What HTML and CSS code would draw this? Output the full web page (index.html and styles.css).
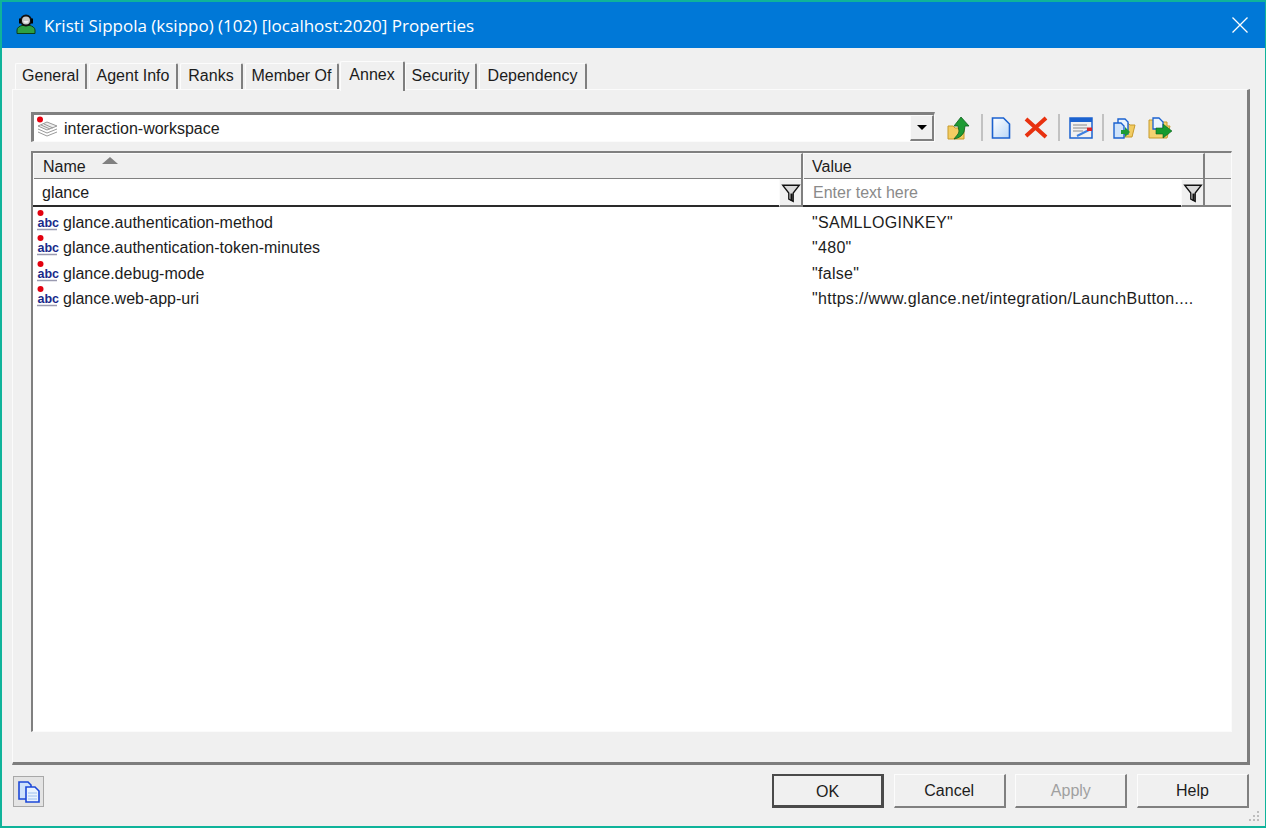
FILE: index.html
```html
<!DOCTYPE html>
<html lang="en">
<head>
<meta charset="utf-8">
<title>Kristi Sippola (ksippo) (102) [localhost:2020] Properties</title>
<link rel="stylesheet" href="styles.css">
</head>
<body>
<div class="window">
  <header class="titlebar">
    <svg class="agent-icon" width="20" height="22" viewBox="0 0 20 22">
      <path d="M1 20.500v-3.500c0-2.500 3-4 5-4.500h8c2 .5 5 2 5 4.500v3.500z" fill="#2ea043" stroke="#0b3d17"/>
      <circle cx="10" cy="7.500" r="5" fill="#c9c9c9" stroke="#111" stroke-width="2"/>
      <path d="M7.500 8c0 2.500 5 2.500 5 0" fill="#f2f2f2" stroke="none"/>
      <path d="M4 5.500v5" stroke="#000" stroke-width="2"/><path d="M16 5.500v5" stroke="#000" stroke-width="2"/>
    </svg>
    <span class="title-text">Kristi Sippola (ksippo) (102) [localhost:2020] Properties</span>
    <svg class="close-icon" width="16" height="16" viewBox="0 0 16 16"><path d="M.5.500l15 15M15.500.500l-15 15" stroke="#fff" stroke-width="1.300" fill="none"/></svg>
  </header>

  <nav class="tabs">
    <span class="tab tab-general">General</span>
    <span class="tab tab-agent">Agent Info</span>
    <span class="tab tab-ranks">Ranks</span>
    <span class="tab tab-member">Member Of</span>
    <span class="tab tab-annex active">Annex</span>
    <span class="tab tab-security">Security</span>
    <span class="tab tab-dependency">Dependency</span>
  </nav>

  <main class="panel">
    <div class="toolbar-row">
      <div class="combo">
        <svg class="layers-icon" width="24" height="24" viewBox="0 0 24 24">
          <path d="M2 11l9-4 10 4-10 4z" fill="#eee" stroke="#999"/>
          <path d="M2 14l9 4 10-4M2 17l9 4 10-4M5 10l9 4M8 9l9 4" fill="none" stroke="#999"/>
          <circle cx="4" cy="4.500" r="3" fill="#e8000f"/>
        </svg>
        <span class="combo-text">interaction-workspace</span>
        <span class="combo-btn"><i class="combo-arrow"></i></span>
      </div>
      <div class="tools">
        <svg class="tool tool-up" width="24" height="26" viewBox="0 0 24 26">
          <path d="M1 11h5l2 2h9v11H1z" fill="#f2cc62" stroke="#c79a2b"/>
          <path d="M7 24c2-3 5-5 5-8l-1-5H7l7-9 8 9h-4l-1 6c-2 4-5 6-10 7z" fill="#1e9b35" stroke="#0c5f1d" stroke-width=".8"/>
        </svg>
        <i class="sep"></i>
        <svg class="tool tool-doc" width="20" height="24" viewBox="0 0 20 24">
          <defs><linearGradient id="docFill" x1="0" y1="0" x2="1" y2="1"><stop offset="0" stop-color="#fff"/><stop offset="1" stop-color="#b9d7f7"/></linearGradient></defs>
          <path d="M1.500 2h11l6 6v14h-17z" fill="url(#docFill)" stroke="#1b62cf" stroke-width="1.600"/>
        </svg>
        <svg class="tool tool-del" width="24" height="24" viewBox="0 0 24 24">
          <path d="M2 3l20 18M22 2L2 20" stroke="#e8310f" stroke-width="4" fill="none"/>
        </svg>
        <i class="sep sep-b"></i>
        <svg class="tool tool-form" width="24" height="24" viewBox="0 0 24 24">
          <rect x="1" y="2" width="22" height="20" fill="#f1f1f1" stroke="#1b62cf" stroke-width="1.500"/>
          <rect x="1" y="2" width="22" height="4" fill="#1b62cf"/>
          <path d="M4 9h14M4 12h14M4 15h10" stroke="#8a8a8a"/>
          <path d="M8 20l12-6" stroke="#3c7fe0" stroke-width="2"/>
          <rect x="18" y="11.500" width="5" height="3.500" fill="#d8232a"/>
        </svg>
        <i class="sep sep-c"></i>
        <svg class="tool tool-import" width="24" height="24" viewBox="0 0 24 24">
          <path d="M11 7h5l2 2h5l-3 12H9z" fill="#f2cc62" stroke="#c79a2b"/>
          <path d="M6 3h7l3 3v12H6z" fill="#eaf3fd" stroke="#1b62cf" stroke-width="1.400"/>
          <path d="M2 7h7l3 3v12H2z" fill="#cfe3fa" stroke="#1b62cf" stroke-width="1.400"/>
          <path d="M9 14h4v-3l5 5-5 5v-3H9z" fill="#1e9b35"/>
        </svg>
        <svg class="tool tool-export" width="26" height="24" viewBox="0 0 26 24">
          <path d="M2 4h5l2 2h11v4h3l-3 12H2z" fill="#f5d271" stroke="#c79a2b"/>
          <path d="M6 2h6l4 4v7H6z" fill="#eaf3fd" stroke="#1b62cf" stroke-width="1.300"/>
          <path d="M9 12h7V8l9 7-9 7v-4H9z" fill="#159a2e" stroke="#0c5f1d" stroke-width=".6"/>
        </svg>
      </div>
    </div>

    <section class="grid">
      <div class="head-row">
        <div class="head-cell head-name"><span>Name</span><i class="sort-arrow"></i></div>
        <div class="head-cell head-value"><span>Value</span></div>
        <div class="head-tail"></div>
      </div>
      <div class="filter-row">
        <div class="filter-cell">
          <span class="filter-text">glance</span>
          <span class="filter-btn"><svg width="20" height="20" viewBox="0 0 18 18"><path d="M1.500 2h15l-5.500 7v7.500l-4-2V9z" fill="#d9d9d9" stroke="#111" stroke-width="1.200"/><path d="M9.500 9.500v6.500" stroke="#111" stroke-width="2"/></svg></span>
        </div>
        <div class="filter-cell filter-cell-value">
          <span class="filter-text placeholder">Enter text here</span>
          <span class="filter-btn"><svg width="20" height="20" viewBox="0 0 18 18"><path d="M1.500 2h15l-5.500 7v7.500l-4-2V9z" fill="#d9d9d9" stroke="#111" stroke-width="1.200"/><path d="M9.500 9.500v6.500" stroke="#111" stroke-width="2"/></svg></span>
        </div>
        <div class="filter-tail"></div>
      </div>
      <div class="rows">
        <div class="row">
          <div class="cell-name"><svg class="abc" width="24" height="24" viewBox="0 0 24 24"><circle cx="4.500" cy="4" r="3" fill="#e3000f"/><text x="1.500" y="18" class="abc-text">abc</text><path d="M1 20.500h20" stroke="#9a9ab0" stroke-width="1.500"/></svg><span>glance.authentication-method</span></div>
          <div class="cell-value">"SAMLLOGINKEY"</div>
        </div>
        <div class="row">
          <div class="cell-name"><svg class="abc" width="24" height="24" viewBox="0 0 24 24"><circle cx="4.500" cy="4" r="3" fill="#e3000f"/><text x="1.500" y="18" class="abc-text">abc</text><path d="M1 20.500h20" stroke="#9a9ab0" stroke-width="1.500"/></svg><span>glance.authentication-token-minutes</span></div>
          <div class="cell-value">"480"</div>
        </div>
        <div class="row">
          <div class="cell-name"><svg class="abc" width="24" height="24" viewBox="0 0 24 24"><circle cx="4.500" cy="4" r="3" fill="#e3000f"/><text x="1.500" y="18" class="abc-text">abc</text><path d="M1 20.500h20" stroke="#9a9ab0" stroke-width="1.500"/></svg><span>glance.debug-mode</span></div>
          <div class="cell-value">"false"</div>
        </div>
        <div class="row">
          <div class="cell-name"><svg class="abc" width="24" height="24" viewBox="0 0 24 24"><circle cx="4.500" cy="4" r="3" fill="#e3000f"/><text x="1.500" y="18" class="abc-text">abc</text><path d="M1 20.500h20" stroke="#9a9ab0" stroke-width="1.500"/></svg><span>glance.web-app-uri</span></div>
          <div class="cell-value">"https://www.glance.net/integration/LaunchButton....</div>
        </div>
      </div>
    </section>
  </main>

  <footer class="footer">
    <span class="copy-btn">
      <svg width="24" height="24" viewBox="0 0 24 24">
        <path d="M2 2h9l3 3v14H2z" fill="#cfe2fb" stroke="#1c48d8" stroke-width="1.600"/>
        <path d="M9 7h9l4 4v11H9z" fill="#eaf3fe" stroke="#1c48d8" stroke-width="1.600"/>
        <path d="M11 13h9M11 16h9M11 19h9" stroke="#9cc0f0"/>
      </svg>
    </span>
    <div class="buttons">
      <span class="btn btn-default">OK</span>
      <span class="btn">Cancel</span>
      <span class="btn btn-disabled">Apply</span>
      <span class="btn">Help</span>
    </div>
  </footer>
  <svg class="grip" width="12" height="12" viewBox="0 0 12 12"><path d="M8 0h2v2H8zM4 4h2v2H4zM8 4h2v2H8zM0 8h2v2H0zM4 8h2v2H4zM8 8h2v2H8z" fill="#bdbdbd"/></svg>
</div>
</body>
</html>
```

FILE: styles.css
```css
* { box-sizing: border-box; }
html, body { margin: 0; padding: 0; }
body {
  width: 1266px;
  height: 828px;
  overflow: hidden;
  font-family: "Liberation Sans", Arial, sans-serif;
  font-size: 16px;
  color: #1c1c1c;
  background: #f0f0f0;
}
.window {
  position: relative;
  width: 1266px;
  height: 828px;
  border: 2px solid #0fb39a;
  border-right-width: 1px;
  background: #f0f0f0;
  display: flex;
  flex-direction: column;
}

/* title bar */
.titlebar {
  height: 46px;
  flex: none;
  background: #0078d7;
  display: flex;
  align-items: center;
  padding: 0 17px 0 14px;
  color: #fff;
}
.agent-icon { flex: none; margin-top: -2px; }
.title-text {
  margin-left: 8px;
  font-family: "Open Sans", "Noto Sans", sans-serif;
  font-size: 17px;
  white-space: nowrap;
}
.close-icon { margin-left: auto; }

/* tabs */
.tabs {
  height: 41px;
  flex: none;
  display: flex;
  align-items: flex-end;
  padding-left: 13px;
  gap: 2px;
}
.tab {
  height: 26px;
  line-height: 24px;
  text-align: center;
  white-space: nowrap;
  background: #f0f0f0;
  border-top: 1px solid #fcfcfc;
  border-left: 1px solid #fcfcfc;
  border-right: 2px solid #7f7f7f;
  border-radius: 2px 2px 0 0;
}
.tab-general { width: 72px; }
.tab-agent { width: 89px; }
.tab-ranks { width: 63px; }
.tab-member { width: 94px; }
.tab-annex {
  width: 65px;
  margin-left: -1px;
  margin-right: -2px;
}
.tab-security { width: 72px; }
.tab-dependency { width: 108px; }
.tab.active {
  position: relative;
  z-index: 1;
  height: 30px;
  line-height: 25px;
  margin-bottom: -2px;
  padding-bottom: 4px;
  background: #f0f0f0;
}

/* panel */
.panel {
  width: 1238px;
  height: 676px;
  flex: none;
  margin-left: 10px;
  background: #f0f0f0;
  border-top: 1px solid #fbfbfb;
  border-left: 1px solid #fbfbfb;
  border-right: 3px solid #7d7d7d;
  border-bottom: 3px solid #7d7d7d;
  padding: 22px 14px 0 18px;
}
.toolbar-row {
  display: flex;
  align-items: flex-start;
  height: 31px;
}
.combo {
  width: 904px;
  height: 30px;
  flex: none;
  display: flex;
  align-items: center;
  background: #fff;
  border-top: 3px solid #808080;
  border-left: 3px solid #808080;
  border-bottom: 1px solid #fbfbfb;
  border-right: 1px solid #fbfbfb;
  padding-left: 2px;
}
.layers-icon { flex: none; margin-top: -3px; }
.combo-text { margin: 1px 0 0 4px; }
.combo-btn {
  margin-left: auto;
  width: 24px;
  height: 26px;
  background: #f0f0f0;
  border-top: 1px solid #fcfcfc;
  border-left: 1px solid #fcfcfc;
  border-right: 2px solid #808080;
  border-bottom: 2px solid #808080;
  display: flex;
  align-items: center;
  justify-content: center;
}
.combo-arrow {
  border-left: 5px solid transparent;
  border-right: 5px solid transparent;
  border-top: 5px solid #000;
}
.tools {
  display: flex;
  align-items: center;
  margin-left: 12px;
  height: 31px;
}
.tool { flex: none; display: block; }
.sep {
  width: 2px;
  height: 27px;
  background: #c2c2c2;
  margin: 0 8px 0 10px;
}
.tool-del { margin-left: 13px; }
.sep-b { margin: 0 9px 0 10px; }
.sep-c { margin: 0 8px 0 9px; }
.tool-export { margin-left: 11px; }

/* grid */
.grid {
  width: 1201px;
  height: 581px;
  margin-top: 8px;
  background: #fff;
  border-top: 2px solid #808080;
  border-left: 2px solid #808080;
  border-right: 1px solid #fbfbfb;
  border-bottom: 1px solid #fbfbfb;
  display: flex;
  flex-direction: column;
}
.head-row {
  display: grid;
  grid-template-columns: 770px 402px 1fr;
  height: 26px;
  flex: none;
  background: #f0f0f0;
  border-bottom: 1px solid #808080;
}
.head-cell {
  position: relative;
  line-height: 26px;
  border-right: 2px solid #808080;
  border-top: 1px solid #fbfbfb;
  border-left: 1px solid #fbfbfb;
  padding-left: 8px;
}
.head-name { padding-left: 9px; }
.sort-arrow {
  position: absolute;
  left: 68px;
  top: 3px;
  border-left: 8px solid transparent;
  border-right: 8px solid transparent;
  border-bottom: 7px solid #808080;
}
.filter-row {
  display: grid;
  grid-template-columns: 770px 402px 1fr;
  height: 25px;
  flex: none;
}
.filter-cell {
  display: flex;
  align-items: stretch;
  background: #fff;
  min-width: 0;
}
.filter-text {
  flex: 1;
  line-height: 25px;
  padding-left: 9px;
  padding-top: 1px;
  border-bottom: 2px solid #2a2a2a;
}
.filter-cell-value .filter-text { padding-left: 10px; }
.placeholder { color: #8a8a8a; }
.filter-btn {
  width: 24px;
  flex: none;
  background: #f0f0f0;
  border-right: 2px solid #808080;
  border-top: 1px solid #fbfbfb;
  border-left: 1px solid #fbfbfb;
  border-bottom: 2px solid #808080;
  display: flex;
  align-items: center;
  justify-content: center;
}
.filter-tail {
  background: #f0f0f0;
  border-bottom: 2px solid #808080;
}
.rows {
  padding-top: 6px;
  flex: 1;
}
.row {
  display: grid;
  grid-template-columns: 770px 1fr;
  height: 25.500px;
  align-items: center;
}
.cell-name {
  display: flex;
  align-items: center;
  padding-left: 3px;
}
.abc { flex: none; margin-right: 3px; margin-top: -4px; }
.abc-text {
  font-family: "Liberation Sans", Arial, sans-serif;
  font-size: 12.500px;
  font-weight: bold;
  fill: #1a2a8a;
}
.cell-value {
  padding-left: 9px;
  white-space: nowrap;
  letter-spacing: .3px;
}

/* footer */
.footer {
  flex: 1;
  display: flex;
  align-items: flex-start;
  justify-content: space-between;
  padding: 9px 16px 0 11px;
}
.copy-btn {
  width: 31px;
  height: 31px;
  margin-top: 2px;
  background: #e4e4e4;
  border: 1px solid #a8a8a8;
  display: flex;
  align-items: center;
  justify-content: center;
}
.buttons { display: flex; gap: 9.670px; }
.btn {
  width: 112px;
  height: 34px;
  line-height: 31px;
  text-align: center;
  background: #f0f0f0;
  border-top: 1px solid #fcfcfc;
  border-left: 1px solid #fcfcfc;
  border-right: 2px solid #808080;
  border-bottom: 2px solid #808080;
}
.btn-default {
  border: 2px solid #4a4a4a;
  border-right-width: 3px;
  border-bottom-width: 3px;
}
.btn-disabled { color: #a0a0a0; }
.grip {
  position: absolute;
  right: 4px;
  bottom: 3px;
}
```
